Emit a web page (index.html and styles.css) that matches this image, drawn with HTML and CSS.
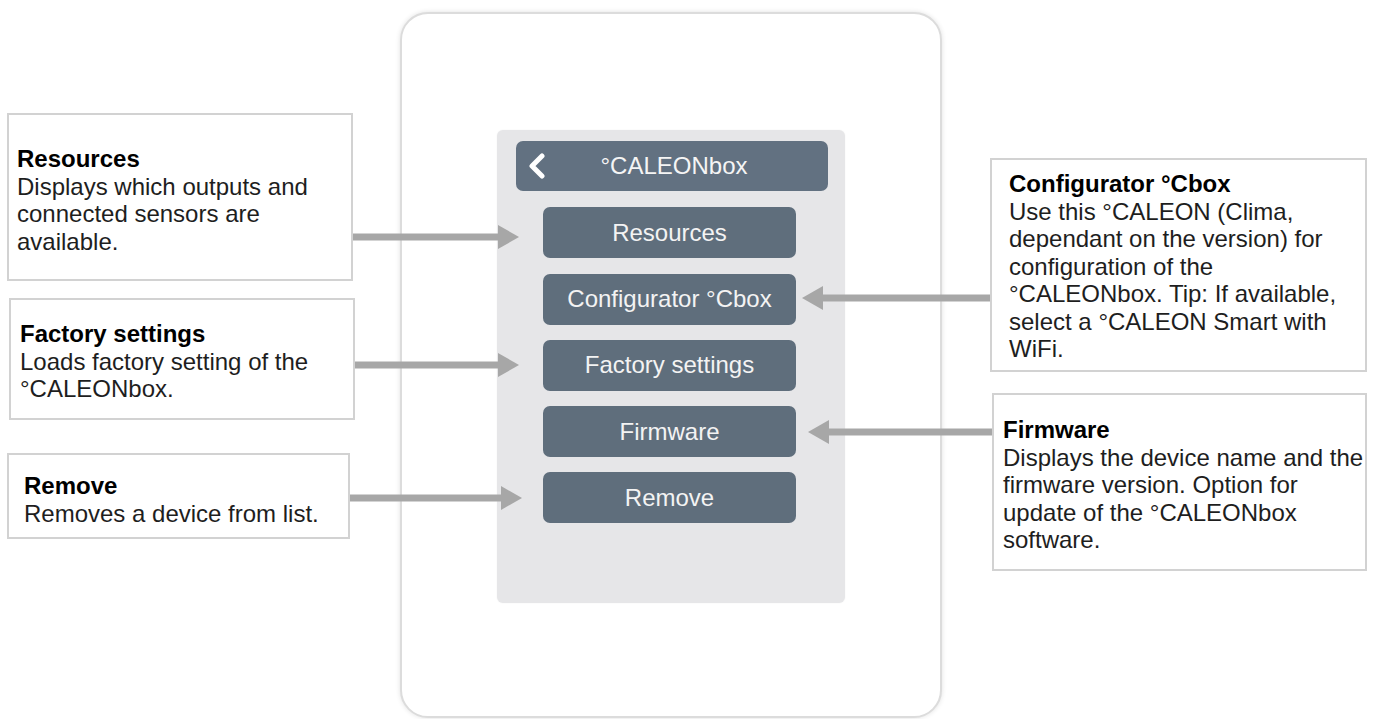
FILE: index.html
```html
<!DOCTYPE html>
<html>
<head>
    <title>°CALEONbox menu</title>
    <link rel="stylesheet" href="styles.css">
</head>
<body>
    <div class="diagram">
        <div class="col-left">
            <div class="note note-res">
                <b>Resources</b><br>
                Displays which outputs and<br>
                connected sensors are<br>
                available.
            </div>
            <div class="note note-factory">
                <b>Factory settings</b><br>
                Loads factory setting of the<br>
                °CALEONbox.
            </div>
            <div class="note note-remove">
                <b>Remove</b><br>
                Removes a device from list.
            </div>
        </div>

        <div class="device">
            <div class="screen">
                <div class="screen-head">
                    <svg class="back" width="18" height="26" viewBox="0 0 18 26">
                        <polyline points="14,3 4,13 14,23" fill="none" stroke="#ffffff" stroke-width="5" stroke-linecap="round" stroke-linejoin="round"/>
                    </svg>
                    <span>°CALEONbox</span>
                </div>
                <div class="menu-btn">Resources</div>
                <div class="menu-btn">Configurator °Cbox</div>
                <div class="menu-btn">Factory settings</div>
                <div class="menu-btn">Firmware</div>
                <div class="menu-btn">Remove</div>
            </div>
        </div>

        <div class="col-right">
            <div class="note note-config">
                <b>Configurator °Cbox</b><br>
                Use this °CALEON (Clima,<br>
                dependant on the version) for<br>
                configuration of the<br>
                °CALEONbox. Tip: If available,<br>
                select a °CALEON Smart with<br>
                WiFi.
            </div>
            <div class="note note-firmware">
                <b>Firmware</b><br>
                Displays the device name and the<br>
                firmware version. Option for<br>
                update of the °CALEONbox<br>
                software.
            </div>
        </div>

        <!-- pointer arrows drawn on top of the diagram -->
        <svg class="arrows" width="1381" height="719" viewBox="0 0 1381 719">
            <g fill="#a7a7a7">
                <rect x="353" y="233.5" width="147" height="7"/>
                <polygon points="498,225 519,237 498,249"/>

                <rect x="355" y="361.5" width="145" height="7"/>
                <polygon points="498,353 519,365 498,377"/>

                <rect x="350" y="494.5" width="153" height="7"/>
                <polygon points="501,486 522,498 501,510"/>

                <rect x="821" y="294.5" width="169" height="7"/>
                <polygon points="823,286 802,298 823,310"/>

                <rect x="827" y="428.5" width="165" height="7"/>
                <polygon points="829,420 808,432 829,444"/>
            </g>
        </svg>
    </div>
</body>
</html>
```

FILE: styles.css
```css
body {
    margin: 0;
    background-color: white;
    font-family: "Liberation Sans", Arial, sans-serif;
}

.diagram {
    position: relative;
    display: flex;
    align-items: flex-start;
    width: 1381px;
    height: 719px;
    overflow: hidden;
}

.arrows {
    position: absolute;
    top: 0;
    left: 0;
    pointer-events: none;
}

.col-left {
    display: flex;
    flex-direction: column;
    width: 400px;
    flex-shrink: 0;
}

.col-right {
    display: flex;
    flex-direction: column;
    margin-left: 48px;
}

.note {
    box-sizing: border-box;
    border: 2px solid #d2d2d2;
    background-color: white;
    font-size: 24px;
    line-height: 27.5px;
    color: #1e1e1e;
    white-space: nowrap;
}

.note b {
    color: #000;
}

.note-res {
    margin: 113px 0 0 7px;
    width: 346px;
    height: 168px;
    padding: 30px 0 0 8px;
}

.note-factory {
    margin: 17px 0 0 9px;
    width: 346px;
    height: 122px;
    padding: 20px 0 0 9px;
}

.note-remove {
    margin: 33px 0 0 7px;
    width: 343px;
    height: 86px;
    padding: 17px 0 0 15px;
}

.note-config {
    margin-top: 158px;
    width: 377px;
    height: 214px;
    padding: 10px 0 0 17px;
}

.note-firmware {
    margin: 21px 0 0 2px;
    width: 375px;
    height: 178px;
    padding: 21px 0 0 9px;
}

.device {
    box-sizing: border-box;
    flex-shrink: 0;
    margin-top: 12px;
    width: 542px;
    height: 706px;
    border: 2px solid #dcdcdc;
    border-radius: 28px;
    box-shadow: 0 0 5px rgba(0, 0, 0, 0.12);
    background-color: white;
}

.screen {
    box-sizing: border-box;
    display: flex;
    flex-direction: column;
    align-items: flex-start;
    gap: 15.25px;
    margin: 116px 0 0 95px;
    width: 348px;
    height: 473px;
    padding-top: 11px;
    background-color: #e6e6e8;
    border-radius: 6px;
    box-shadow: 0 0 2px rgba(0, 0, 0, 0.06);
}

.screen-head {
    display: grid;
    grid-template-columns: 1fr auto 1fr;
    align-items: center;
    margin: 0 0 1px 19px;
    width: 312px;
    height: 50px;
    background-color: #627181;
    border-radius: 7px;
    color: #f5f5f5;
    font-size: 24px;
}

.screen-head .back {
    margin-left: 12px;
}

.screen-head span {
    margin-left: 4px;
}

.menu-btn {
    display: flex;
    align-items: center;
    justify-content: center;
    margin-left: 46px;
    width: 253px;
    height: 51px;
    background-color: #5f6e7c;
    border-radius: 7px;
    color: #f3f3f3;
    font-size: 24px;
}
```
